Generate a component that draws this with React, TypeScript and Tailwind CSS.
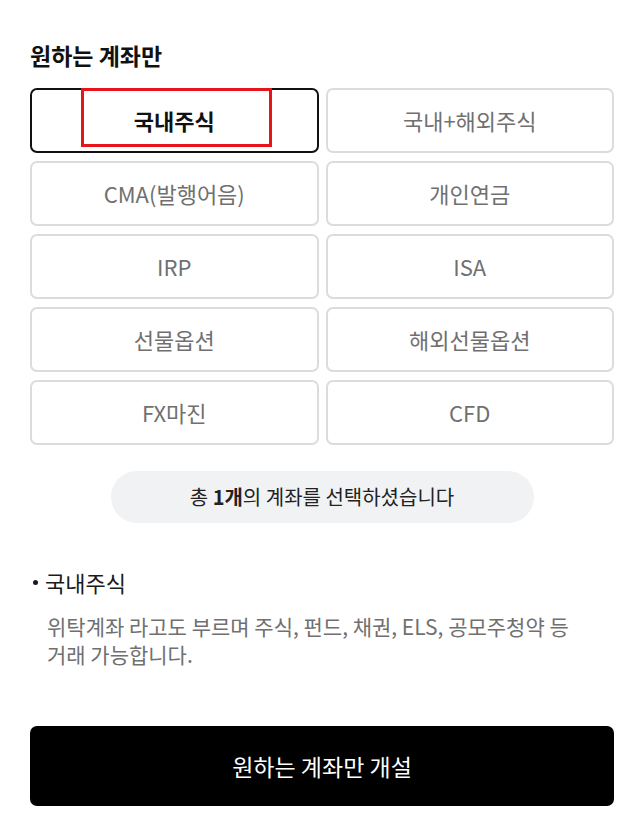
import React from "react";

const items = [
  "국내주식",
  "국내+해외주식",
  "CMA(발행어음)",
  "개인연금",
  "IRP",
  "ISA",
  "선물옵션",
  "해외선물옵션",
  "FX마진",
  "CFD",
];

export default function App() {
  return (
    <div
      className="w-[636px] h-[829px] bg-white pl-[30px] pr-[22px] pt-[39px] overflow-hidden"
      style={{ fontFamily: '"Noto Sans CJK KR", "Noto Sans", sans-serif' }}
    >
      <h1 className="text-[23px] leading-[32px] font-bold text-[#111]">원하는 계좌만</h1>

      <div className="mt-[17px] grid grid-cols-2 gap-x-[7px] gap-y-[8px]">
        {items.map((label, i) => {
          const selected = i === 0;
          return (
            <div key={label} className="relative">
              <button
                className={
                  selected
                    ? "w-full h-[65px] rounded-[7px] border-2 border-[#111] bg-white text-[22px] font-bold text-[#111] flex items-center justify-center"
                    : "w-full h-[65px] rounded-[7px] border-2 border-[#dcdcdc] bg-white text-[22px] text-[#707070] flex items-center justify-center"
                }
              >
                {label}
              </button>
              {selected && (
                <div className="absolute left-[51px] top-0 w-[191px] h-[59px] border-[3px] border-[#e8141b] pointer-events-none" />
              )}
            </div>
          );
        })}
      </div>

      <div className="mt-[26px] mx-auto w-[423px] h-[52px] rounded-full bg-[#f1f2f4] flex items-center justify-center text-[20px] text-[#222]">
        <span>
          총 <b className="font-bold">1개</b>의 계좌를 선택하셨습니다
        </span>
      </div>

      <div className="mt-[43px] flex items-center h-[32px] text-[22px] leading-[32px] text-[#1a1a1a]">
        <span className="w-[5px] h-[5px] rounded-full bg-[#1a1a1a] ml-[3px] mr-[7px]" />
        <span>국내주식</span>
      </div>

      <p className="mt-[14px] pl-[17px] text-[21px] leading-[28px] text-[#707070]">
        위탁계좌 라고도 부르며 주식, 펀드, 채권, ELS, 공모주청약 등
        <br />
        거래 가능합니다.
      </p>

      <button className="mt-[58px] w-full h-[80px] rounded-[7px] bg-black text-white text-[23px] flex items-center justify-center">
        원하는 계좌만 개설
      </button>
    </div>
  );
}
